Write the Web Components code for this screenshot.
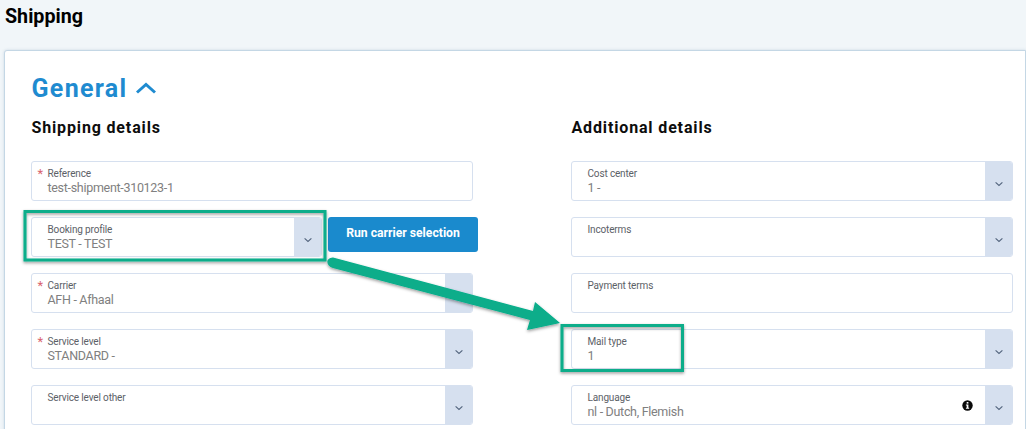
<!DOCTYPE html>
<html><head><meta charset="utf-8">
<style>
html,body{margin:0;padding:0;height:429px;overflow:hidden;background:#f1f6f9;font-family:Roboto,"Liberation Sans",sans-serif}
</style></head><body>
<template id="t-field"><style>
:host{display:flex;height:40px;box-sizing:border-box;border:1px solid #d6e0ef;border-radius:3px;background:#fff;position:relative;overflow:hidden;min-width:0}
.main{flex:1;min-width:0;padding:6px 0 0 15.5px;position:relative}
.star{position:absolute;left:5.500px;top:5px;color:#d9646f;font-size:13px;line-height:14px}
.label{font-size:10px;line-height:12px;color:#5c6167;height:12px;letter-spacing:-.15px}
.value{font-size:12.5px;line-height:15px;color:#808080;height:15px;white-space:nowrap;letter-spacing:-.3px}
.btn{width:28px;flex:none;background:#d6e0ef;margin:-1px -1px -1px 0;display:flex;align-items:flex-start;justify-content:center}
.btn svg{margin-top:20px;display:block}
.info{position:absolute;right:39px;top:14px;display:block}
:host(:not([select])) .btn{display:none}
:host(:not([required])) .star{display:none}
:host(:not([info])) .info{display:none}
:host([nochevron]) .btn svg{display:none}
</style><div class="main"><span class="star">*</span><div class="label"></div><div class="value"></div></div>
<svg class="info" width="11" height="11" viewBox="0 0 11 11"><circle cx="5.5" cy="5.5" r="5.2" fill="#0a0a0a"/><rect x="4.7" y="2" width="1.7" height="1.6" fill="#fff"/><path d="M3.9 4.6h2.5v3.2h.8v1H3.9v-1h.8V5.6h-.8z" fill="#fff"/></svg>
<div class="btn"><svg width="10" height="6" viewBox="0 0 10 6"><path d="M1.600 1.400 5 4.400l3.400-3" fill="none" stroke="#55667f" stroke-width="1.200"/></svg></div>
</template>
<template id="t-button"><style>
:host{display:flex;align-items:center;justify-content:center;width:150px;height:35px;box-sizing:border-box;flex:none;background:#1a8acd;border-radius:3px;color:#fff;font-size:12.2px;font-weight:700;margin:0 -5px 0 0;padding-bottom:3px}
</style><slot></slot></template>
<template id="t-column"><style>
:host{display:block;width:442px}
h3{margin:0 0 23px;padding-left:.5px;font-size:16px;line-height:20px;font-weight:700;color:#0d0d0d;letter-spacing:.85px}
.list{display:flex;flex-direction:column;gap:16px}
</style><h3></h3><div class="list"><slot></slot></div></template>
<template id="t-row"><style>
:host{display:flex;gap:6px;align-items:flex-start}
::slotted(app-field){flex:1}
</style><slot></slot></template>
<template id="t-card"><style>
:host{display:block;background:#fff;border:1px solid #c4d7e5;border-radius:3px 0 0 0;margin:0 0 0 4px;height:400px;box-sizing:border-box;padding:22px 12px 0 26px;box-shadow:0 0 3px rgba(120,150,180,.3)}
.head{display:flex;align-items:center;gap:8px;height:32px;margin-bottom:13px;color:#1f8bd0;font-size:25px;font-weight:700;letter-spacing:1.3px;line-height:32px;padding-left:.5px}
.head svg{display:block;margin-top:-2px}
.cols{display:flex;gap:98px}
</style><div class="head"><span>General</span><svg width="22" height="12" viewBox="0 0 22 12"><path d="M2 10.500 11 2.500 20 10.500" fill="none" stroke="#1f8bd0" stroke-width="3"/></svg></div><div class="cols"><slot></slot></div></template>
<template id="t-page"><style>
:host{display:block}
h1{margin:0;height:50px;box-sizing:border-box;padding:6px 0 0 5px;font-size:19.7px;line-height:22px;font-weight:700;color:#000}
</style><h1>Shipping</h1><slot></slot></template>
<template id="t-note"><style>
:host{position:absolute;inset:0;pointer-events:none;display:block}
svg{position:absolute;left:0;top:0}
</style><svg width="1026" height="429" viewBox="0 0 1026 429">
<defs><filter id="s" x="-10%" y="-10%" width="120%" height="130%"><feDropShadow dx="0" dy="1.5" stdDeviation="1.7" flood-color="#000" flood-opacity=".4"/></filter></defs>
<g fill="none" stroke="#07ad8a" stroke-width="3" filter="url(#s)"><rect x="25" y="211.5" width="300" height="48.500"/><rect x="562" y="325.500" width="120.500" height="45"/></g>
<path d="M333 257.500 L533 311 L535 302 L560 323 L527 330 L530 320 L333 268 C326 266 325 258 333 257.500 Z" fill="#07ad8a" filter="url(#s)"/>
</svg></template>
<app-page>
<app-card>
<app-column title-text="Shipping details">
<app-field required label="Reference" value="test-shipment-310123-1"></app-field>
<app-row><app-field select label="Booking profile" value="TEST - TEST"></app-field><app-button>Run carrier selection</app-button></app-row>
<app-field select nochevron required label="Carrier" value="AFH - Afhaal"></app-field>
<app-field select required label="Service level" value="STANDARD -"></app-field>
<app-field select label="Service level other" value=""></app-field>
</app-column>
<app-column title-text="Additional details">
<app-field select label="Cost center" value="1 -"></app-field>
<app-field select label="Incoterms" value=""></app-field>
<app-field label="Payment terms" value=""></app-field>
<app-field select label="Mail type" value="1"></app-field>
<app-field select info label="Language" value="nl - Dutch, Flemish"></app-field>
</app-column>
</app-card>
</app-page>
<app-note></app-note>
<script>
function def(name,tid,init){customElements.define(name,class extends HTMLElement{constructor(){super();this.attachShadow({mode:'open'}).appendChild(document.getElementById(tid).content.cloneNode(true));}connectedCallback(){init&&init(this,this.shadowRoot);}});}
def('app-page','t-page');def('app-card','t-card');def('app-row','t-row');def('app-button','t-button');def('app-note','t-note');
def('app-column','t-column',(h,s)=>{s.querySelector('h3').textContent=h.getAttribute('title-text');});
def('app-field','t-field',(h,s)=>{s.querySelector('.label').textContent=h.getAttribute('label');s.querySelector('.value').textContent=h.getAttribute('value');});
</script>
</body></html>
